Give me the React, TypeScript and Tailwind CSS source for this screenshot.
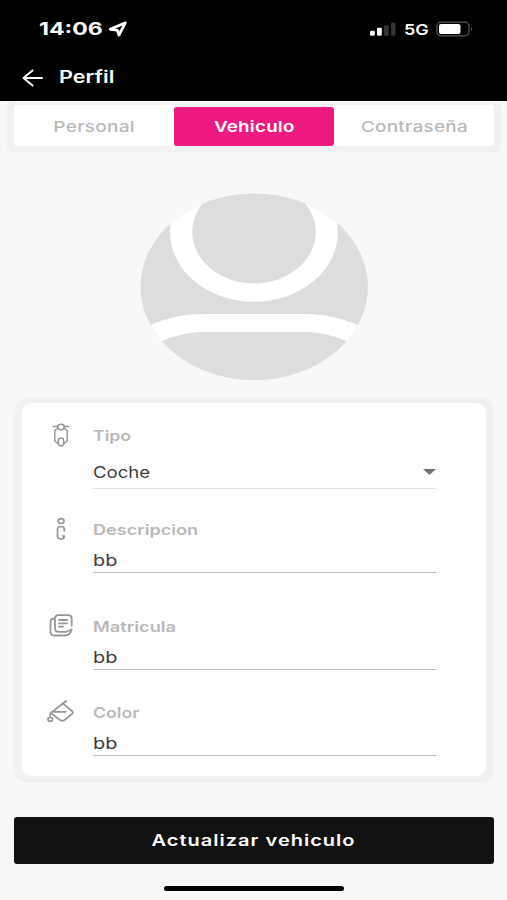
import type { ReactNode } from "react";

function Header() {
  return (
    <header className="flex h-[101px] flex-col bg-black text-white">
      <div className="flex h-[58px] items-center pl-[38.500px] pr-[34px]">
        <span className="inline-block w-[64px] origin-left scale-x-[1.28] text-[18px] leading-none font-bold">14:06</span>
        <svg className="ml-[5px]" width="20" height="16" viewBox="0 0 20 16" fill="none">
          <path d="M17.3 1.8 2.2 8.3 9.2 9.2 11 14Z" stroke="white" strokeWidth="2.8" strokeLinejoin="round" />
        </svg>
        <div className="ml-auto flex items-center">
          <svg width="27" height="14" viewBox="0 0 27 14">
            <rect x="1" y="8.8" width="4.8" height="5" rx="1.3" fill="white" />
            <rect x="8" y="5.8" width="4.8" height="8" rx="1.3" fill="white" />
            <rect x="15" y="3.3" width="4.8" height="10.5" rx="1.3" fill="#333" />
            <rect x="22" y="0.5" width="4.5" height="13.3" rx="1.3" fill="#333" />
          </svg>
          <span className="ml-[8px] inline-block w-[24px] origin-left scale-x-[1.2] text-[15px] leading-none font-semibold">5G</span>
          <svg className="-mt-px ml-[8px]" width="37" height="16" viewBox="0 0 37 16">
            <rect x="1" y="1.2" width="32" height="13.6" rx="4" fill="none" stroke="#555" strokeWidth="1.3" />
            <rect x="3" y="3" width="21.5" height="10" rx="2" fill="white" />
            <path d="M35 6v4q2-2 0-4Z" fill="#666" />
          </svg>
        </div>
      </div>
      <div className="flex h-[39px] items-center pl-[22px]">
        <svg width="21" height="18" viewBox="0 0 21 18" fill="none" stroke="white" strokeWidth="2" strokeLinecap="round" strokeLinejoin="round">
          <path d="M20 9H1.5M10.5 1.5 1.5 9l9 7.5" />
        </svg>
        <span className="ml-[15.500px] inline-block origin-left scale-x-[1.27] text-[17px] leading-none font-semibold">Perfil</span>
      </div>
    </header>
  );
}

function Tabs() {
  return (
    <nav className="mr-[6px] ml-[7px] mt-[2px] flex h-[49px] rounded-[5px] bg-[#f1f1f1] px-[7px] pt-[2px] pb-[6px] text-[15px] leading-none font-medium text-[#b9b9b9]">
      <div className="flex flex-1 items-center justify-center rounded-l-[3px] bg-white pt-[2px]">
        <span className="inline-block scale-x-[1.27] tracking-[0.2px]">Personal</span>
      </div>
      <div className="mt-[2px] flex flex-1 items-center justify-center rounded-[3px] bg-[#ef1982] font-semibold text-white">
        <span className="inline-block scale-x-[1.25] tracking-[0.2px]">Vehiculo</span>
      </div>
      <div className="flex flex-1 items-center justify-center rounded-r-[3px] bg-white pt-[2px]">
        <span className="inline-block scale-x-[1.26] tracking-[0.2px]">Contraseña</span>
      </div>
    </nav>
  );
}

function Avatar() {
  return (
    <svg className="mx-auto mt-[41px] block shrink-0" width="228" height="188" viewBox="140 193 228 188">
      <defs>
        <clipPath id="avatar">
          <ellipse cx="254.2" cy="286.8" rx="113.7" ry="93.4" />
        </clipPath>
      </defs>
      <g clipPath="url(#avatar)">
        <rect x="140" y="193" width="228" height="188" fill="#ddd" />
        <path fillRule="evenodd" fill="white" d="M170 232a84 69.7 0 1 0 168 0a84 69.7 0 1 0-168 0ZM192.3 232a61.7 51.4 0 1 1 123.4 0a61.7 51.4 0 1 1-123.4 0Z" />
        <path fill="white" d="M140 330Q170 314 203 314H305Q338 314 368 330V353Q337 332 303 332H205Q171 332 140 353Z" />
      </g>
    </svg>
  );
}

function Field({ icon, label, children, className }: { icon: ReactNode; label: ReactNode; children: ReactNode; className: string }) {
  return (
    <div className={`flex ${className}`}>
      <div className="flex h-[25px] w-[39px] shrink-0 items-center justify-center">{icon}</div>
      <div className="ml-[13px] w-[343px]">
        <div className="flex h-[28px] items-center text-[14.5px] leading-none font-semibold text-[#b9b9b9]">{label}</div>
        {children}
      </div>
    </div>
  );
}

function TextValue() {
  return (
    <div className="flex h-[29px] items-center border-b-[1.5px] border-[#bebebe] pt-[3px] text-[16px] leading-none text-[#3d3d3d]">
      <span className="inline-block origin-left scale-x-[1.24]">bb</span>
    </div>
  );
}

const stroke = { fill: "none", stroke: "#979797", strokeWidth: 1.5, strokeLinecap: "round", strokeLinejoin: "round" } as const;

function ScooterIcon() {
  return (
    <svg width="18" height="24" viewBox="0 0 18 24" {...stroke}>
      <path d="M1 3.5H5.5M12.5 3.5H17M5.5 5.5 2.8 7.8V18L5.5 20.3M12.5 5.5 15.2 7.8V18L12.5 20.3" />
      <ellipse cx="9" cy="4" rx="3.3" ry="2.7" />
      <rect x="6.3" y="15" width="5.4" height="8" rx="2.7" />
    </svg>
  );
}

function InfoIcon() {
  return (
    <svg width="12" height="24" viewBox="0 0 12 24" {...stroke} strokeWidth="1.7">
      <ellipse cx="6.1" cy="4" rx="2.9" ry="2.4" />
      <path d="M9.3 14V12.3Q9.3 9.5 5.9 9.5Q2.5 9.5 2.5 12.5V19Q2.5 22 5.9 22Q9.3 22 9.3 19.5V19H7.5" />
    </svg>
  );
}

function DocumentsIcon() {
  return (
    <svg width="24" height="23" viewBox="0 0 24 23" {...stroke} strokeWidth="1.8">
      <path d="M22.7 11.5V4.5Q22.7 1.2 19 1.2H9.5Q6 1.2 6 4.5V14.5Q6 17.8 9.5 17.8H17.5L22.7 15.5Q21 21.5 16 21.5H5.5Q1.5 21.5 1.5 18V8Q1.5 4.5 5.5 4.5" />
      <path d="M10 6H18M10 9.3H18M10 12.7H14" />
    </svg>
  );
}

function PaintIcon() {
  return (
    <svg width="27" height="23" viewBox="0 0 27 23" {...stroke} strokeWidth="1.7">
      <path d="M19 1 5 12Q4 13 5 14L13 20Q15.5 21.5 17.5 20L25 14Q26.5 12.5 25 11L16 3.7M5 11.8H19M4 12.5Q2.8 13.5 3.2 16" />
      <ellipse cx="3.3" cy="19.3" rx="2.3" ry="2" />
    </svg>
  );
}

export default function App() {
  return (
    <div className="flex h-[900px] w-[507px] flex-col overflow-hidden bg-[#f8f8f8] font-[Inter,sans-serif]">
      <Header />
      <Tabs />
      <Avatar />
      <main className="mr-[13px] ml-[14px] mt-[17px] h-[385px] rounded-[14px] bg-[#f1f1f1] px-[8px] pt-[5px] pb-[7px]">
        <form className="h-full rounded-[10px] bg-white pt-[19px] pl-[19px]">
          <Field className="h-[94px]" icon={<ScooterIcon />} label={<span className="inline-block origin-left scale-x-[1.22]">Tipo</span>}>
            <div className="flex h-[39px] items-center justify-between border-b border-[#e2e2e2] pt-[5px] text-[16px] leading-none text-[#3d3d3d]">
              <span className="inline-block origin-left scale-x-[1.16]">Coche</span>
              <svg width="13" height="6" viewBox="0 0 13 6"><path d="M0 0H13L6.5 6Z" fill="#737373" /></svg>
            </div>
          </Field>
          <Field className="h-[97px]" icon={<InfoIcon />} label={<span className="inline-block origin-left scale-x-[1.25]">Descripcion</span>}>
            <TextValue />
          </Field>
          <Field className="h-[86px]" icon={<DocumentsIcon />} label={<span className="inline-block origin-left scale-x-[1.26]">Matricula</span>}>
            <TextValue />
          </Field>
          <Field className="h-[60px]" icon={<PaintIcon />} label={<span className="inline-block origin-left scale-x-[1.22]">Color</span>}>
            <TextValue />
          </Field>
        </form>
      </main>
      <button type="button" className="mr-[13px] ml-[14px] mt-[34px] flex h-[47px] shrink-0 items-center justify-center rounded-[3px] bg-[#111] pb-px text-[16px] leading-none font-semibold text-white">
        <span className="inline-block scale-x-[1.25] tracking-[0.8px]">Actualizar vehiculo</span>
      </button>
      <div className="mx-auto mt-[22px] h-[5px] w-[180px] shrink-0 rounded-full bg-black" />
    </div>
  );
}
